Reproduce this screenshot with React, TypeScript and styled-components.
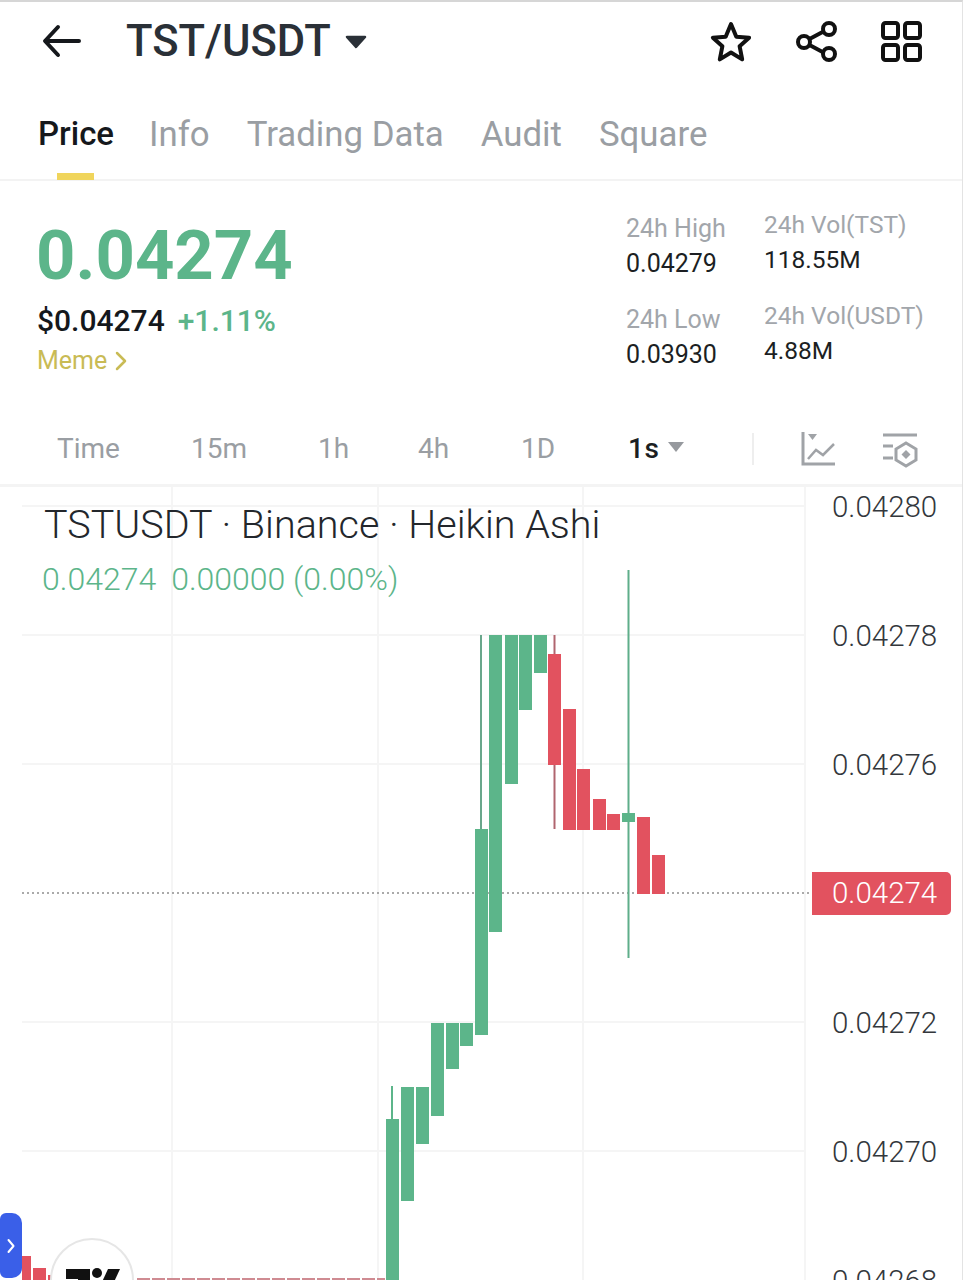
import React from "react";
import styled, { createGlobalStyle } from "styled-components";

const Global = createGlobalStyle`
  html, body { margin: 0; padding: 0; background: #fff; }
  body { font-family: Roboto, "Liberation Sans", sans-serif; }
`;

const GREEN = "#5cb58a";
const RED = "#e2525f";

const Page = styled.div`
  width: 963px;
  height: 1280px;
  box-sizing: border-box;
  overflow: hidden;
  position: relative;
  display: flex;
  flex-direction: column;
  background: #fff;
  border-top: 2px solid #d6d6d6;
  border-right: 1px solid #e3e3e3;
`;

const Header = styled.header`
  height: 80px;
  flex: none;
  display: flex;
  align-items: center;
  padding-left: 42px;
  padding-right: 42px;
`;

const BackIcon = styled.svg`
  width: 40px;
  height: 34px;
  flex: none;
  margin-top: -2px;
`;

const Title = styled.h1`
  margin: 0 0 0 44px;
  font-size: 43.500px;
  line-height: 48px;
  font-weight: 500;
  color: #2a3037;
`;

const TitleCaret = styled.svg`
  width: 22px;
  height: 14px;
  margin: 0 0 0 14px;
  flex: none;
`;

const HeaderIcons = styled.div`
  margin-left: auto;
  display: flex;
  align-items: center;
  gap: 46px;
  margin-top: -1px;
`;

const HeadIcon = styled.svg<{ $extra?: number }>`
  width: 42px;
  height: 42px;
  flex: none;
  display: block;
  margin-left: -2px;
  margin-right: ${(p) => (p.$extra ? p.$extra - 2 : -2)}px;
`;

const Tabs = styled.nav`
  height: 99px;
  flex: none;
  box-sizing: border-box;
  display: flex;
  gap: 37px;
  padding: 31px 0 0 38px;
  border-bottom: 2px solid #f3f3f3;
`;

const Tab = styled.div<{ $active?: boolean }>`
  position: relative;
  height: 42px;
  font-size: ${(p) => (p.$active ? "33px" : "34.800px")};
  line-height: 42px;
  font-weight: ${(p) => (p.$active ? 500 : 400)};
  color: ${(p) => (p.$active ? "#15181c" : "#9a9ea3")};
  margin-right: ${(p) => (p.$active ? "-2px" : "0")};
  ${(p) =>
    p.$active &&
    `&::after {
      content: "";
      position: absolute;
      left: 19px;
      top: 60px;
      width: 37px;
      height: 7px;
      background: #f0d55c;
    }`}
`;

const Stats = styled.section`
  height: 239px;
  flex: none;
  box-sizing: border-box;
  display: flex;
  justify-content: space-between;
  padding: 32px 0 0 36px;
`;

const PriceBlock = styled.div`
  display: flex;
  flex-direction: column;
`;

const BigPrice = styled.div`
  font-size: 68.800px;
  line-height: 86px;
  font-weight: 700;
  color: ${GREEN};
`;

const FiatRow = styled.div`
  display: flex;
  gap: 13px;
  margin-top: 4px;
  margin-left: 1px;
  font-size: 30px;
  line-height: 36px;
`;

const Fiat = styled.span`
  font-weight: 500;
  color: #15181c;
`;

const Change = styled.span`
  font-weight: 500;
  color: ${GREEN};
`;

const Category = styled.div`
  display: flex;
  align-items: center;
  gap: 8px;
  margin-top: 4px;
  margin-left: 1px;
  font-size: 25px;
  line-height: 36px;
  color: #c9bb55;
`;

const CategoryChevron = styled.svg`
  width: 12px;
  height: 20px;
  flex: none;
`;

const StatGrid = styled.div`
  display: grid;
  grid-template-columns: 138px 161px;
  padding-right: 37px;
  align-content: start;
`;

const StatColumn = styled.div<{ $raised?: boolean }>`
  display: flex;
  flex-direction: column;
  margin-top: ${(p) => (p.$raised ? "-4px" : "0")};
  font-size: ${(p) => (p.$raised ? "24.500px" : "25px")};
`;

const StatLabel = styled.div`
  font-size: inherit;
  line-height: 32px;
  color: #a2a6ab;
  white-space: nowrap;
`;

const StatValue = styled.div`
  font-size: inherit;
  line-height: 32px;
  margin-top: 3px;
  margin-bottom: 24px;
  color: #1c1f23;
`;

const TimeBar = styled.div`
  height: 67px;
  flex: none;
  box-sizing: border-box;
  display: grid;
  grid-template-columns: 134px 127px 100px 103px 107px 124px 48px 81px 38px;
  align-items: center;
  padding: 0 0 6px 57px;
  border-bottom: 3px solid #f4f4f4;
`;

const TimeItem = styled.span<{ $active?: boolean }>`
  font-size: 28px;
  line-height: 36px;
  color: ${(p) => (p.$active ? "#1c1f23" : "#9a9ea3")};
  font-weight: ${(p) => (p.$active ? 500 : 400)};
  letter-spacing: ${(p) => (p.$active ? "0.500px" : "0")};
`;

const ActiveTime = styled.div`
  display: flex;
  align-items: center;
  gap: 8px;
`;

const SmallCaret = styled.svg`
  width: 18px;
  height: 12px;
  flex: none;
  margin-top: -4px;
`;

const Separator = styled.div`
  width: 2px;
  height: 32px;
  background: #eeeeee;
`;

const ToolIcon = styled.svg`
  width: 38px;
  height: 38px;
  display: block;
`;

const ChartRow = styled.div`
  flex: 1;
  min-height: 0;
  display: flex;
  position: relative;
`;

const Plot = styled.svg`
  width: 812px;
  height: 793px;
  flex: none;
  display: block;
`;

const Legend = styled.div`
  position: absolute;
  left: 44px;
  top: 14px;
  display: flex;
  flex-direction: column;
`;

const LegendTitle = styled.div`
  font-size: 39.500px;
  line-height: 48px;
  font-weight: 300;
  color: #23272c;
`;

const LegendValues = styled.div`
  margin: 11px 0 0 -2px;
  display: flex;
  gap: 15px;
  font-size: 32px;
  line-height: 38px;
  font-weight: 300;
  color: #5cb58a;
`;

const Axis = styled.div`
  flex: 1;
  display: flex;
  flex-direction: column;
  gap: 91px;
  padding-top: 1px;
`;

const AxisLabel = styled.div<{ $current?: boolean }>`
  flex: none;
  box-sizing: border-box;
  width: 139px;
  height: ${(p) => (p.$current ? "43px" : "38px")};
  margin: ${(p) => (p.$current ? "-3px 0 -2px" : "0")};
  padding-left: 20px;
  font-size: 29.500px;
  line-height: ${(p) => (p.$current ? "43px" : "38px")};
  font-weight: 300;
  color: ${(p) => (p.$current ? "#fff" : "#33373c")};
  background: ${(p) => (p.$current ? RED : "transparent")};
  border-radius: ${(p) => (p.$current ? "0 5px 5px 0" : "0")};
`;

const SideHandle = styled.div`
  position: absolute;
  left: 0;
  bottom: 2px;
  width: 22px;
  height: 65px;
  display: flex;
  align-items: center;
  justify-content: center;
  background: #3a5fe8;
  border-radius: 6px 10px 10px 6px;
`;

const HandleChevron = styled.svg`
  width: 8px;
  height: 16px;
  margin-top: 1px;
`;

const LogoBadge = styled.div`
  position: absolute;
  left: 50px;
  top: 751px;
  width: 84px;
  height: 84px;
  box-sizing: border-box;
  border-radius: 50%;
  background: #fff;
  border: 2px solid #e6e6e6;
`;

const LogoMark = styled.svg`
  position: absolute;
  left: 14px;
  top: 25px;
  width: 54px;
  height: 30px;
`;

type Candle = { x: number; w?: number; top: number; bottom: number; up?: boolean };

const candles: Candle[] = [
  { x: 22, w: 9, top: 1256, bottom: 1280 },
  { x: 33, top: 1268, bottom: 1280 },
  { x: 48, w: 3, top: 1275, bottom: 1280 },
  { x: 386, top: 1119, bottom: 1282, up: true },
  { x: 401, top: 1087, bottom: 1201, up: true },
  { x: 416, top: 1087, bottom: 1144, up: true },
  { x: 431, top: 1023, bottom: 1116, up: true },
  { x: 446, top: 1023, bottom: 1069, up: true },
  { x: 460, top: 1023, bottom: 1046, up: true },
  { x: 475, top: 829, bottom: 1035, up: true },
  { x: 489, top: 635, bottom: 932, up: true },
  { x: 505, top: 635, bottom: 784, up: true },
  { x: 519, top: 635, bottom: 710, up: true },
  { x: 534, top: 635, bottom: 673, up: true },
  { x: 548, top: 654, bottom: 765 },
  { x: 563, top: 709, bottom: 830 },
  { x: 577, top: 769, bottom: 830 },
  { x: 593, top: 799, bottom: 830 },
  { x: 607, top: 814, bottom: 830 },
  { x: 622, top: 813, bottom: 822, up: true },
  { x: 637, top: 817, bottom: 894 },
  { x: 652, top: 855, bottom: 894 },
];

const wicks = [
  { x: 392, top: 1086, bottom: 1119, color: GREEN },
  { x: 481, top: 635, bottom: 829, color: "#6aa78c" },
  { x: 554.5, top: 635, bottom: 829, color: "#b0656f" },
  { x: 628.5, top: 570, bottom: 958, color: "#5fae8a" },
];

const gridY = [506, 635, 764, 1022, 1151];
const gridX = [172, 378, 583, 805];
const axisValues = ["0.04280", "0.04278", "0.04276", "0.04274", "0.04272", "0.04270", "0.04268"];

export default function App() {
  return (
    <Page>
      <Global />
      <Header>
        <BackIcon viewBox="0 0 40 34">
          <path d="M37 17H4M16 3L3 17l13 14" fill="none" stroke="#15181c" strokeWidth="4" strokeLinecap="round" strokeLinejoin="round" />
        </BackIcon>
        <Title>TST/USDT</Title>
        <TitleCaret viewBox="0 0 22 14">
          <path d="M2 2h18l-9 10z" fill="#2a3037" stroke="#2a3037" strokeWidth="2.5" strokeLinejoin="round" />
        </TitleCaret>
        <HeaderIcons>
          <HeadIcon viewBox="0 0 40 42" $extra={2}>
            <path
              d="M20 3l5.3 12.7 12.8 1-9.5 8.5 2.6 13.2L20 31.5 8.8 38.4l2.6-13.2-9.5-8.5 12.8-1z"
              fill="none"
              stroke="#111"
              strokeWidth="4"
              strokeLinejoin="round"
            />
          </HeadIcon>
          <HeadIcon viewBox="0 0 42 42">
            <g fill="none" stroke="#111" strokeWidth="4">
              <circle cx="8" cy="21" r="6" />
              <circle cx="33" cy="8" r="6" />
              <circle cx="33" cy="33" r="6" />
              <path d="M13.5 18l14-7.5M13.5 24l14 7.5" />
            </g>
          </HeadIcon>
          <HeadIcon viewBox="0 0 42 42">
            <g fill="none" stroke="#111" strokeWidth="4">
              <rect x="3" y="2" width="15" height="15" rx="2.5" />
              <rect x="25" y="2" width="15" height="15" rx="2.5" />
              <rect x="3" y="24" width="15" height="15" rx="2.5" />
              <rect x="25" y="24" width="15" height="15" rx="2.5" />
            </g>
          </HeadIcon>
        </HeaderIcons>
      </Header>

      <Tabs>
        <Tab $active>Price</Tab>
        <Tab>Info</Tab>
        <Tab>Trading Data</Tab>
        <Tab>Audit</Tab>
        <Tab>Square</Tab>
      </Tabs>

      <Stats>
        <PriceBlock>
          <BigPrice>0.04274</BigPrice>
          <FiatRow>
            <Fiat>$0.04274</Fiat>
            <Change>+1.11%</Change>
          </FiatRow>
          <Category>
            Meme
            <CategoryChevron viewBox="0 0 12 20">
              <path d="M2 2l8 8-8 8" fill="none" stroke="#c9bb55" strokeWidth="2.5" strokeLinecap="round" strokeLinejoin="round" />
            </CategoryChevron>
          </Category>
        </PriceBlock>
        <StatGrid>
          <StatColumn>
            <StatLabel>24h High</StatLabel>
            <StatValue>0.04279</StatValue>
            <StatLabel>24h Low</StatLabel>
            <StatValue>0.03930</StatValue>
          </StatColumn>
          <StatColumn $raised>
            <StatLabel>24h Vol(TST)</StatLabel>
            <StatValue>118.55M</StatValue>
            <StatLabel>24h Vol(USDT)</StatLabel>
            <StatValue>4.88M</StatValue>
          </StatColumn>
        </StatGrid>
      </Stats>

      <TimeBar>
        <TimeItem>Time</TimeItem>
        <TimeItem>15m</TimeItem>
        <TimeItem>1h</TimeItem>
        <TimeItem>4h</TimeItem>
        <TimeItem>1D</TimeItem>
        <ActiveTime>
          <TimeItem $active>1s</TimeItem>
          <SmallCaret viewBox="0 0 18 12">
            <path d="M1 1h16l-8 10z" fill="#96999e" />
          </SmallCaret>
        </ActiveTime>
        <Separator />
        <ToolIcon viewBox="0 0 38 38">
          <g fill="none" stroke="#a0a3a7" strokeWidth="3">
            <path d="M3 2v32h32" />
            <path d="M8 29l8-9 7 5 11-11" strokeWidth="2.5" />
          </g>
          <path d="M8 4h9l-4.500 6z" fill="#a0a3a7" />
        </ToolIcon>
        <ToolIcon viewBox="0 0 38 38">
          <g fill="none" stroke="#a0a3a7" strokeWidth="3">
            <path d="M2 5h34M2 16h10M2 28h10" />
            <path d="M25 13l10 6v11l-10 6-10-6V19z" />
          </g>
          <path d="M25 20l4.500 4.500L25 29l-4.500-4.500z" fill="#a0a3a7" />
        </ToolIcon>
      </TimeBar>

      <ChartRow>
        <Plot viewBox="0 487 812 793">
          {gridY.map((y) => (
            <line key={y} x1="22" x2="805" y1={y} y2={y} stroke="#f5f5f5" strokeWidth="2" />
          ))}
          {gridX.map((x) => (
            <line key={x} x1={x} x2={x} y1="487" y2="1280" stroke="#f5f5f5" strokeWidth="2" />
          ))}
          <line x1="22" x2="812" y1="893" y2="893" stroke="#8f8f8f" strokeWidth="1.500" strokeDasharray="2 3" />
          <line x1="137" x2="385" y1="1279" y2="1279" stroke="#cf8b92" strokeWidth="2" strokeDasharray="13 2" />
          {wicks.map((w) => (
            <line key={w.x} x1={w.x} x2={w.x} y1={w.top} y2={w.bottom} stroke={w.color} strokeWidth="2" />
          ))}
          {candles.map((c) => (
            <rect
              key={c.x}
              x={c.x}
              y={c.top}
              width={c.w ?? 13}
              height={c.bottom - c.top}
              fill={c.up ? GREEN : RED}
            />
          ))}
        </Plot>
        <Axis>
          {axisValues.map((v, i) => (
            <AxisLabel key={v} $current={i === 3}>
              {v}
            </AxisLabel>
          ))}
        </Axis>
        <Legend>
          <LegendTitle>TSTUSDT · Binance · Heikin Ashi</LegendTitle>
          <LegendValues>
            <span>0.04274</span>
            <span>0.00000 (0.00%)</span>
          </LegendValues>
        </Legend>
        <SideHandle>
          <HandleChevron viewBox="0 0 8 16">
            <path d="M1.500 2l5 6-5 6" fill="none" stroke="#fff" strokeWidth="2" strokeLinecap="round" strokeLinejoin="round" />
          </HandleChevron>
        </SideHandle>
        <LogoBadge>
          <LogoMark viewBox="0 0 54 30">
            <path d="M0 4h24v26H12V14H0z" fill="#111" />
            <circle cx="31" cy="8" r="5" fill="#111" />
            <path d="M42 4h12L42 30H30z" fill="#111" />
          </LogoMark>
        </LogoBadge>
      </ChartRow>
    </Page>
  );
}
